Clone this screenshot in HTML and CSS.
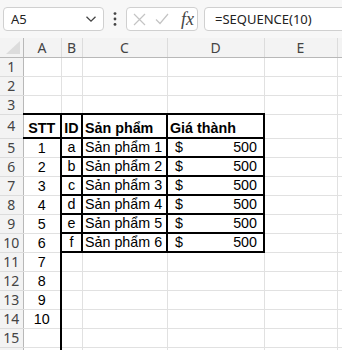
FILE: index.html
```html
<!DOCTYPE html>
<html>
<head>
<meta charset="utf-8">
<link rel="stylesheet" href="styles.css">
</head>
<body>
<div class="toolbar">
  <div class="namebox">
    <span class="nb-text">A5</span>
    <svg class="chev" width="12" height="8" viewBox="0 0 12 8"><path d="M1.5 1.8 L6 6.2 L10.5 1.8" fill="none" stroke="#444" stroke-width="1.3"/></svg>
  </div>
  <div class="dots">
    <svg width="4" height="14" viewBox="0 0 4 14"><circle cx="2" cy="1.6" r="1.4" fill="#444"/><circle cx="2" cy="7" r="1.4" fill="#444"/><circle cx="2" cy="12.4" r="1.4" fill="#444"/></svg>
  </div>
  <div class="fxbox">
    <svg class="ico-x" width="13" height="13" viewBox="0 0 13 13"><path d="M1 1 L12 12 M12 1 L1 12" stroke="#c4c4c4" stroke-width="1.2" fill="none"/></svg>
    <svg class="ico-ok" width="14" height="12" viewBox="0 0 14 12"><path d="M1 6.5 L5 10.5 L13 1" stroke="#c4c4c4" stroke-width="1.2" fill="none"/></svg>
    <span class="fx">fx</span>
  </div>
  <div class="formula">=SEQUENCE(10)</div>
</div>
<table class="sheet">
  <colgroup>
    <col class="c-rh"><col class="c-a"><col class="c-b"><col class="c-c"><col class="c-d"><col class="c-e"><col class="c-f">
  </colgroup>
  <tr class="hdr">
    <th class="corner"><svg width="16" height="14" viewBox="0 0 16 14"><polygon points="15,0 15,13 1,13" fill="#dcdcdc"/></svg></th>
    <th class="ch">A</th><th class="ch">B</th><th class="ch">C</th><th class="ch">D</th><th class="ch">E</th><th class="ch"></th>
  </tr>
  <tr><th class="rh">1</th><td></td><td></td><td></td><td></td><td></td><td></td></tr>
  <tr><th class="rh">2</th><td></td><td></td><td></td><td></td><td></td><td></td></tr>
  <tr><th class="rh">3</th><td></td><td></td><td></td><td></td><td></td><td></td></tr>
  <tr class="r4"><th class="rh">4</th>
    <td class="bold ctr bt bb br">STT</td><td class="bold ctr bt bb br">ID</td><td class="bold bt bb br">Sản phẩm</td><td class="bold bt bb br">Giá thành</td><td></td><td></td></tr>
  <tr><th class="rh">5</th><td class="ctr br">1</td><td class="ctr br bb">a</td><td class="br bb">Sản phẩm 1</td><td class="br bb acc"><span>$</span><span>500</span></td><td></td><td></td></tr>
  <tr><th class="rh">6</th><td class="ctr br">2</td><td class="ctr br bb">b</td><td class="br bb">Sản phẩm 2</td><td class="br bb acc"><span>$</span><span>500</span></td><td></td><td></td></tr>
  <tr><th class="rh">7</th><td class="ctr br">3</td><td class="ctr br bb">c</td><td class="br bb">Sản phẩm 3</td><td class="br bb acc"><span>$</span><span>500</span></td><td></td><td></td></tr>
  <tr><th class="rh">8</th><td class="ctr br">4</td><td class="ctr br bb">d</td><td class="br bb">Sản phẩm 4</td><td class="br bb acc"><span>$</span><span>500</span></td><td></td><td></td></tr>
  <tr><th class="rh">9</th><td class="ctr br">5</td><td class="ctr br bb">e</td><td class="br bb">Sản phẩm 5</td><td class="br bb acc"><span>$</span><span>500</span></td><td></td><td></td></tr>
  <tr><th class="rh">10</th><td class="ctr br">6</td><td class="ctr br bb">f</td><td class="br bb">Sản phẩm 6</td><td class="br bb acc"><span>$</span><span>500</span></td><td></td><td></td></tr>
  <tr><th class="rh">11</th><td class="ctr br">7</td><td></td><td></td><td></td><td></td><td></td></tr>
  <tr><th class="rh">12</th><td class="ctr br">8</td><td></td><td></td><td></td><td></td><td></td></tr>
  <tr><th class="rh">13</th><td class="ctr br">9</td><td></td><td></td><td></td><td></td><td></td></tr>
  <tr><th class="rh">14</th><td class="ctr br">10</td><td></td><td></td><td></td><td></td><td></td></tr>
  <tr><th class="rh">15</th><td class="br"></td><td></td><td></td><td></td><td></td><td></td></tr>
  <tr><th class="rh"></th><td class="br"></td><td></td><td></td><td></td><td></td><td></td></tr>
</table>
</body>
</html>
```
FILE: styles.css
```css
html, body {
  margin: 0;
  padding: 0;
  background: #ffffff;
  overflow: hidden;
  width: 342px;
  height: 350px;
}

.toolbar {
  display: flex;
  align-items: center;
  height: 38px;
  box-sizing: border-box;
  padding: 0 0 0 3px;
  background: #f7f7f7;
  font-family: "Noto Sans", "Liberation Sans", sans-serif;
  font-size: 13px;
  color: #222;
}

.toolbar > * { flex-shrink: 0; }

.namebox {
  width: 101px;
  height: 24px;
  box-sizing: border-box;
  background: #fff;
  border: 1px solid #d0d0d0;
  border-radius: 4px;
  display: flex;
  align-items: center;
  justify-content: space-between;
  padding: 0 6px 0 7px;
}

.nb-text { line-height: 1; }

.dots {
  width: 22px;
  display: flex;
  justify-content: center;
}
.dots svg { display: block; }

.fxbox {
  width: 72px;
  height: 24px;
  box-sizing: border-box;
  background: #fff;
  border: 1px solid #d0d0d0;
  border-radius: 4px;
  display: flex;
  align-items: center;
  padding: 0 0 0 6px;
}
.ico-x { margin-right: 9px; }
.ico-ok { margin-right: 12px; }
.fx {
  font-family: "Liberation Serif", serif;
  font-style: italic;
  font-size: 18px;
  color: #444;
  line-height: 1;
}

.formula {
  margin-left: 6px;
  width: 150px;
  height: 24px;
  box-sizing: border-box;
  background: #fff;
  border: 1px solid #d0d0d0;
  border-radius: 4px;
  padding-left: 10px;
  display: flex;
  align-items: center;
}

.sheet {
  border-collapse: collapse;
  table-layout: fixed;
  width: 357px;
  font-family: "Liberation Sans", Arial, sans-serif;
  font-size: 14.3px;
  color: #000;
}

.c-rh { width: 23px; }
.c-a { width: 38px; }
.c-b { width: 21px; }
.c-c { width: 85px; }
.c-d { width: 97px; }
.c-e { width: 73px; }
.c-f { width: 20px; }

.sheet tr { height: 19px; }
.sheet tr.hdr { height: 19px; }
.sheet tr.r4 { height: 24px; }

.sheet td {
  border: 1px solid #e1e1e1;
  padding: 0 2px;
  white-space: nowrap;
  overflow: hidden;
  vertical-align: bottom;
  line-height: 17px;
}

.sheet th {
  background: #f3f3f3;
  font-family: "Noto Sans", "Liberation Sans", sans-serif;
  font-weight: normal;
  font-size: 14px;
  color: #444;
  padding: 0;
  line-height: 17px;
}

.sheet th.ch {
  border-left: 1px solid #dcdcdc;
  border-right: 1px solid #dcdcdc;
  border-bottom: 1px solid #b8b8b8;
  text-align: center;
}

.sheet th.rh {
  border-right: 1px solid #b8b8b8;
  border-bottom: 1px solid #dcdcdc;
  text-align: center;
}

.sheet tr.r4 th.rh { vertical-align: top; padding-top: 2px; }

.sheet th.corner {
  border-right: 1px solid #b8b8b8;
  border-bottom: 1px solid #b8b8b8;
  text-align: left;
  vertical-align: bottom;
}
.corner svg { display: block; margin: 0 0 2px 5px; }

.bold { font-weight: bold; }
.ctr { text-align: center; }

.sheet td.bt { border-top: 2px solid #000; }
.sheet td.bb { border-bottom: 2px solid #000; }
.sheet td.br { border-right: 2px solid #000; }

.sheet td.acc {
  padding: 0 6px 0 7px;
}
.acc span:first-child { float: left; }
.acc span:last-child { float: right; }
```
